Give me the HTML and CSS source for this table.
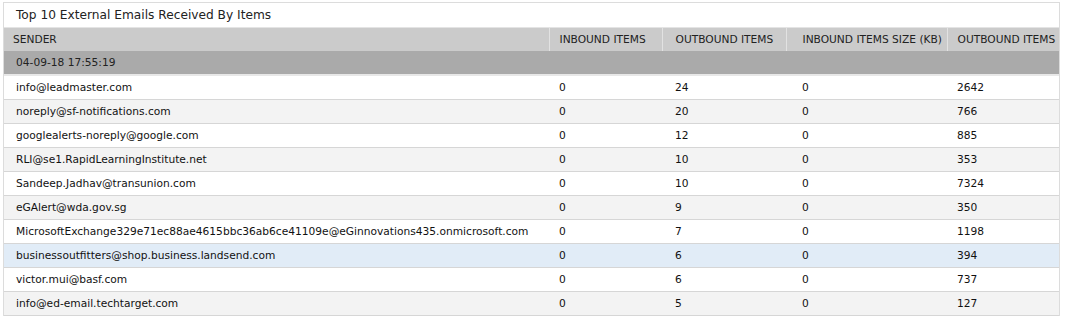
FILE: index.html
```html
<!DOCTYPE html>
<html>
<head>
<meta charset="utf-8">
<link rel="stylesheet" href="styles.css">
</head>
<body>
<div class="panel">
  <div class="title">Top 10 External Emails Received By Items</div>
  <div class="scroller">
  <table class="grid">
    <colgroup>
      <col class="c-sender"><col class="c-in"><col class="c-out"><col class="c-insize"><col class="c-outsize">
    </colgroup>
    <thead>
      <tr>
        <th>SENDER</th><th>INBOUND ITEMS</th><th>OUTBOUND ITEMS</th><th>INBOUND ITEMS SIZE (KB)</th><th>OUTBOUND ITEMS SIZE (KB)</th>
      </tr>
    </thead>
    <tbody>
      <tr class="group"><td colspan="5">04-09-18 17:55:19</td></tr>
      <tr><td>info@leadmaster.com</td><td>0</td><td>24</td><td>0</td><td>2642</td></tr>
      <tr class="alt"><td>noreply@sf-notifications.com</td><td>0</td><td>20</td><td>0</td><td>766</td></tr>
      <tr><td>googlealerts-noreply@google.com</td><td>0</td><td>12</td><td>0</td><td>885</td></tr>
      <tr class="alt"><td>RLI@se1.RapidLearningInstitute.net</td><td>0</td><td>10</td><td>0</td><td>353</td></tr>
      <tr><td>Sandeep.Jadhav@transunion.com</td><td>0</td><td>10</td><td>0</td><td>7324</td></tr>
      <tr class="alt"><td>eGAlert@wda.gov.sg</td><td>0</td><td>9</td><td>0</td><td>350</td></tr>
      <tr><td>MicrosoftExchange329e71ec88ae4615bbc36ab6ce41109e@eGinnovations435.onmicrosoft.com</td><td>0</td><td>7</td><td>0</td><td>1198</td></tr>
      <tr class="hl"><td>businessoutfitters@shop.business.landsend.com</td><td>0</td><td>6</td><td>0</td><td>394</td></tr>
      <tr><td>victor.mui@basf.com</td><td>0</td><td>6</td><td>0</td><td>737</td></tr>
      <tr class="alt"><td>info@ed-email.techtarget.com</td><td>0</td><td>5</td><td>0</td><td>127</td></tr>
    </tbody>
  </table>
  </div>
</div>
</body>
</html>
```
FILE: styles.css
```css
html, body {
  margin: 0;
  padding: 0;
  background: #ffffff;
}
body {
  padding: 2px 0 0 3px;
  font-family: "DejaVu Sans", Verdana, sans-serif;
  color: #111;
}
.panel {
  width: 1055px;
  border: 1px solid #dcdcdc;
  border-bottom: none;
  overflow: hidden;
  background: #fff;
}
.title {
  height: 24px;
  line-height: 24px;
  padding-left: 12px;
  font-size: 12.2px;
  color: #222;
  border-bottom: 1px solid #e4e4e4;
}
.scroller {
  overflow: hidden;
}
.grid {
  border-collapse: collapse;
  table-layout: fixed;
  width: 1180px;
  font-size: 10.65px;
}
.c-sender { width: 545px; }
.c-in { width: 113px; }
.c-out { width: 124px; }
.c-insize { width: 161px; }
.c-outsize { width: 237px; }
.grid th {
  background: #cbcbcb;
  height: 23px;
  padding: 0 0 0 10px;
  text-align: left;
  font-weight: normal;
  color: #222;
  border-left: 1px solid #e2e2e2;
  white-space: nowrap;
}
.grid th:first-child {
  border-left: none;
  padding-left: 9px;
}
.grid td {
  height: 23px;
  padding: 0 0 0 10px;
  border-bottom: 1px solid #d6d6d6;
  white-space: nowrap;
  overflow: hidden;
}
.grid td:first-child {
  padding-left: 12px;
}
.grid th:nth-child(3), .grid td:nth-child(3) { padding-left: 13px; }
.grid th:nth-child(4), .grid td:nth-child(4) { padding-left: 16px; }
.grid tr.group td {
  background: #aaaaaa;
  height: 23px;
  border-bottom: 2px solid #e8e8e8;
  color: #222;
  padding-left: 12px;
}
.grid tr.alt td {
  background: #f3f3f3;
}
.grid tr.hl td {
  background: #e1ecf7;
}
```
